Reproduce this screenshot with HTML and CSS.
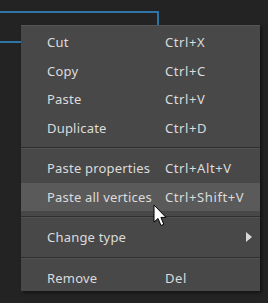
FILE: index.html
```html
<!DOCTYPE html>
<html lang="en">
<head>
    <meta charset="UTF-8">
    <meta name="viewport" content="width=device-width, initial-scale=1.0">
    <title>Context Menu</title>
    <link rel="stylesheet" href="styles.css">
</head>
<body>
    <div class="canvas">
        <!-- Selected shape behind the menu -->
        <div class="shape"></div>

        <!-- Context menu -->
        <div class="menu">
            <div class="item"><span class="label">Cut</span><span class="key">Ctrl+X</span></div>
            <div class="item"><span class="label">Copy</span><span class="key">Ctrl+C</span></div>
            <div class="item"><span class="label">Paste</span><span class="key">Ctrl+V</span></div>
            <div class="item"><span class="label">Duplicate</span><span class="key">Ctrl+D</span></div>
            <div class="separator"></div>
            <div class="item"><span class="label">Paste properties</span><span class="key">Ctrl+Alt+V</span></div>
            <div class="item hover"><span class="label">Paste all vertices</span><span class="key">Ctrl+Shift+V</span></div>
            <div class="separator"></div>
            <div class="item"><span class="label">Change type</span><span class="key"></span><span class="arrow"></span></div>
            <div class="separator"></div>
            <div class="item"><span class="label">Remove</span><span class="key">Del</span></div>
        </div>

        <!-- Mouse pointer -->
        <svg class="cursor" width="16" height="25" viewBox="0 0 16 25">
            <path d="M1 1 L1 18 L5 14.5 L8 21.5 L10.8 20.3 L7.9 13.4 L13 13.4 Z" fill="#fff" stroke="#000" stroke-width="1" stroke-linejoin="round"/>
        </svg>
    </div>
</body>
</html>
```

FILE: styles.css
```css
body {
    margin: 0;
    background-color: #232323;
    font-family: "Noto Sans", "Open Sans", sans-serif;
    font-size: 13px;
    color: #dcdcdc;
}
.canvas {
    position: relative;
    width: 268px;
    height: 303px;
    overflow: hidden;
}
.shape {
    position: absolute;
    left: -10px;
    top: 11px;
    width: 165px;
    height: 28px;
    border: 2px solid #2f74a6;
}
.menu {
    position: absolute;
    left: 21px;
    top: 25px;
    width: 239px;
    height: 266px;
    box-sizing: border-box;
    padding-top: 2px;
    background-color: #484848;
    border-top: 1px solid #555555;
    box-shadow: 2px 2px 3px rgba(0, 0, 0, 0.45);
}
.item {
    display: flex;
    align-items: center;
    height: 28.5px;
    padding-left: 26px;
    position: relative;
}
.item.hover {
    background-color: #5a5a5a;
}
.label {
    width: 118px;
    white-space: nowrap;
    letter-spacing: 0.2px;
}
.key {
    white-space: nowrap;
    letter-spacing: 0.6px;
}
.arrow {
    position: absolute;
    right: 8px;
    top: 9px;
    width: 0;
    height: 0;
    border-top: 5px solid transparent;
    border-bottom: 5px solid transparent;
    border-left: 6px solid #d8d8d8;
}
.separator {
    height: 1px;
    margin: 5px 0;
    background-color: #2f2f2f;
    border-bottom: 1px solid #525252;
}
.cursor {
    position: absolute;
    left: 153px;
    top: 204px;
}
```
